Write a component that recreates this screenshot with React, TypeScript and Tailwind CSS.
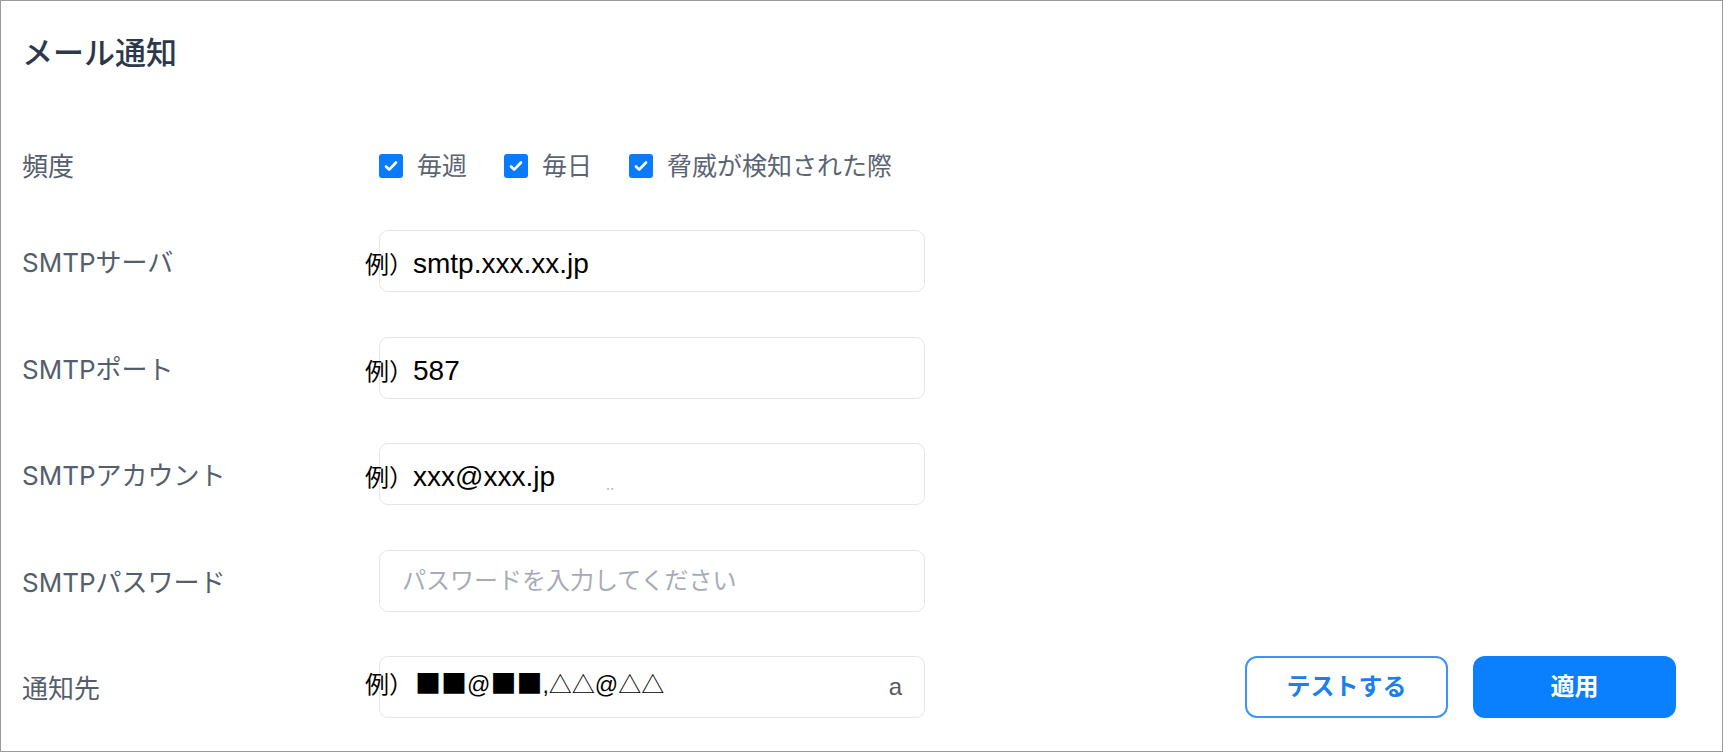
import React from 'react';

const jp = 'Inter, "Noto Sans CJK JP", "Noto Sans", sans-serif';
const arial = '"Liberation Sans", "Noto Sans CJK JP", sans-serif';
const cjk = '"Noto Sans CJK JP", sans-serif';

const CheckBox: React.FC<{ label: string }> = ({ label }) => (
  <label className="flex items-center">
    <span className="w-[24px] h-[24px] rounded-[3px] bg-[#0a7bff] flex items-center justify-center">
      <svg width="16" height="16" viewBox="0 0 16 16" fill="none">
        <path d="M3 8.5l3.2 3.2L13 4.5" stroke="white" strokeWidth="2.6" strokeLinecap="round" strokeLinejoin="round" />
      </svg>
    </span>
    <span className="ml-[14px] text-[25px] leading-none text-[#5b6472]">{label}</span>
  </label>
);

type Field = {
  label: string;
  example?: string;
  placeholder?: string;
  suffix?: string;
  extra?: boolean;
  marks?: boolean;
};

// the example strings sit over the inputs, a little to the left of the box
const Example: React.FC<{ text: string; lift?: boolean; marks?: boolean }> = ({ text, lift, marks }) => (
  <div className={`absolute left-[-15px] flex items-baseline text-black ${lift ? 'top-[8px]' : 'top-[14px]'}`}>
    <span className="text-[24px]" style={{ fontFamily: cjk }}>例）</span>
    {marks ? (
      <span className="text-[23px] leading-[32px] ml-[2px]">
        <span style={{ fontFamily: cjk }} className="text-[26px]">■■</span>
        <span style={{ fontFamily: arial }}>@</span>
        <span style={{ fontFamily: cjk }} className="text-[26px]">■■</span>
        <span style={{ fontFamily: arial }}>,</span>
        <span style={{ fontFamily: cjk }}>△△</span>
        <span style={{ fontFamily: arial }}>@</span>
        <span style={{ fontFamily: cjk }}>△△</span>
      </span>
    ) : (
      <span className="text-[28px] leading-[32px]" style={{ fontFamily: arial }}>
        {text}
      </span>
    )}
  </div>
);

const fields: Field[] = [
  { label: 'SMTPサーバ', example: 'smtp.xxx.xx.jp' },
  { label: 'SMTPポート', example: '587' },
  { label: 'SMTPアカウント', example: 'xxx@xxx.jp', extra: true },
  { label: 'SMTPパスワード', placeholder: 'パスワードを入力してください' },
  { label: '通知先', example: '■■@■■,△△@△△', suffix: 'a', marks: true },
];

const App: React.FC = () => {
  return (
    <div className="w-full h-[752px] border border-[#9a9a9a] bg-white pl-[21px] pr-[46px] pt-[34px]" style={{ fontFamily: jp }}>
      <h1 className="text-[31px] leading-[36px] font-medium text-[#2b394b]">メール通知</h1>

      <div className="mt-[64px] flex items-center h-[62px]">
        <div className="w-[357px] text-[26px] text-[#545e6c]">頻度</div>
        <div className="flex items-center gap-[37px]">
          <CheckBox label="毎週" />
          <CheckBox label="毎日" />
          <CheckBox label="脅威が検知された際" />
        </div>
      </div>

      <div className="mt-[33px] flex flex-col gap-[44.5px]">
        {fields.map((f, i) => (
          <div key={f.label} className="flex items-center h-[62px]">
            <div className="w-[357px] text-[26px] text-[#545e6c] pt-[3px]">{f.label}</div>
            <div className="relative w-[546px] h-[62px] rounded-[9px] border border-[#e3e6ea] flex items-center px-[22px]">
              {f.placeholder && <span className="text-[24px] text-[#a6acb7]">{f.placeholder}</span>}
              {f.example && <Example text={f.example} lift={i === 4} marks={f.marks} />}
              {f.extra && (
                <span className="absolute left-[226px] top-[30px] text-[14px] text-[#9aa0a8]">‥</span>
              )}
              {f.suffix && (
                <span className="ml-auto text-[24px] text-[#555b63]" style={{ fontFamily: arial }}>
                  {f.suffix}
                </span>
              )}
            </div>
            {i === fields.length - 1 && (
              <div className="flex-1 flex justify-end gap-[25px]">
                <button className="w-[203px] h-[62px] rounded-[12px] border-2 border-[#3d93f7] text-[#1b80ee] text-[24px] font-bold">
                  テストする
                </button>
                <button className="w-[203px] h-[62px] rounded-[12px] bg-[#0a80ff] text-white text-[24px] font-bold">
                  適用
                </button>
              </div>
            )}
          </div>
        ))}
      </div>
    </div>
  );
};

export default App;
